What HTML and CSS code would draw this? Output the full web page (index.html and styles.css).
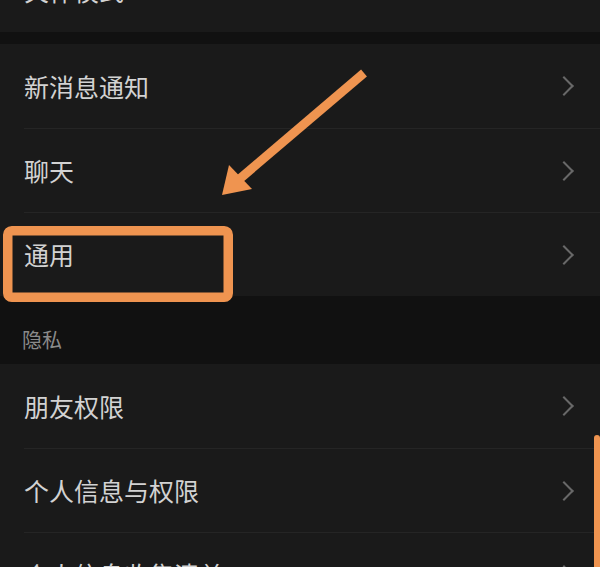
FILE: index.html
```html
<!DOCTYPE html>
<html lang="zh-CN">
<head>
    <meta charset="UTF-8">
    <meta name="viewport" content="width=device-width, initial-scale=1.0">
    <title>设置</title>
    <link rel="stylesheet" href="styles.css">
</head>
<body>
    <main class="settings">
        <ul class="group">
            <li class="row"><span class="label">关怀模式</span><span class="chev"></span></li>
        </ul>

        <div class="gap"></div>

        <ul class="group">
            <li class="row"><span class="label">新消息通知</span><span class="chev"></span></li>
            <li class="row"><span class="label">聊天</span><span class="chev"></span></li>
            <li class="row"><span class="label">通用</span><span class="chev"></span></li>
        </ul>

        <div class="group-title">隐私</div>

        <ul class="group">
            <li class="row"><span class="label">朋友权限</span><span class="chev"></span></li>
            <li class="row"><span class="label">个人信息与权限</span><span class="chev"></span></li>
            <li class="row"><span class="label">个人信息收集清单</span><span class="chev"></span></li>
        </ul>
    </main>

    <!-- annotation drawn on top of the screenshot -->
    <svg class="markup" width="600" height="567" viewBox="0 0 600 567">
        <line x1="364" y1="73" x2="236" y2="182" stroke="#ef9450" stroke-width="9"/>
        <polygon points="222,195 229,165 252,189" fill="#ef9450"/>
        <rect x="7.75" y="230.75" width="220.5" height="66.5" rx="4" fill="none" stroke="#ef9450" stroke-width="9.5"/>
    </svg>
    <div class="scroll-thumb"></div>
</body>
</html>
```

FILE: styles.css
```css
body {
    margin: 0;
    padding: 0;
    width: 600px;
    height: 567px;
    overflow: hidden;
    background-color: #111111;
    font-family: "Noto Sans CJK SC", "Noto Sans", sans-serif;
    position: relative;
}
.settings {
    margin-top: -52px;
}
ul {
    list-style-type: none;
    margin: 0;
    padding: 0;
}
.group {
    background-color: #1a1a1a;
    padding-left: 24px;
}
.row {
    height: 84px;
    display: flex;
    align-items: center;
    justify-content: space-between;
    padding-right: 29px;
    border-top: 1px solid #252525;
    box-sizing: border-box;
}
.row:first-child {
    border-top: none;
}
.label {
    color: #d2d2d2;
    font-size: 25px;
    line-height: 1;
}
.chev {
    width: 12px;
    height: 12px;
    border-top: 2px solid #686868;
    border-right: 2px solid #686868;
    transform: rotate(45deg);
}
.gap {
    height: 12px;
}
.group-title {
    height: 68px;
    box-sizing: border-box;
    padding: 34px 0 0 22px;
    color: #8a8a8a;
    font-size: 20px;
    line-height: 1;
}
.markup {
    position: absolute;
    left: 0;
    top: 0;
}
.scroll-thumb {
    position: absolute;
    right: 0;
    top: 435px;
    width: 6px;
    height: 140px;
    background-color: #ef9450;
    border-radius: 3px 3px 0 0;
}
```
